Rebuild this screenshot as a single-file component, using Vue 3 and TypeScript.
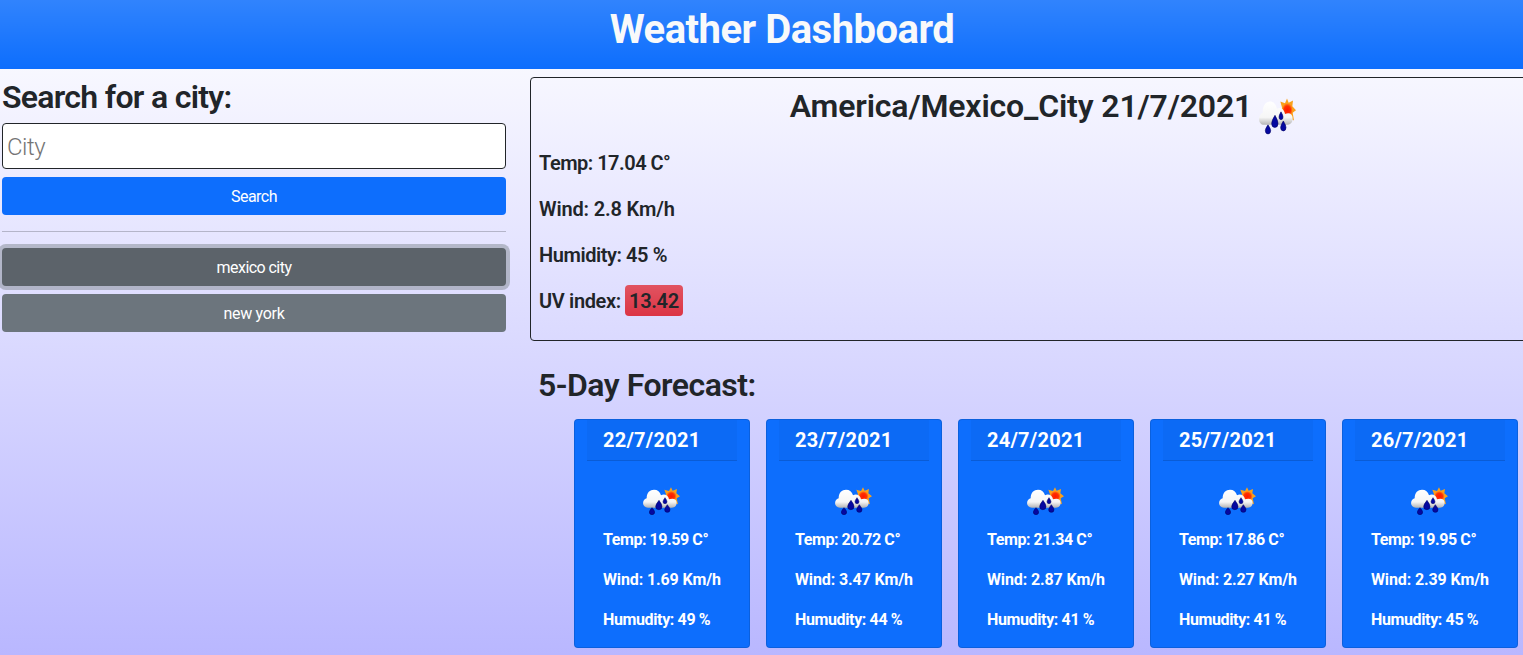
<script setup lang="ts">
import { ref, h } from 'vue'

interface Day {
  date: string
  temp: string
  wind: string
  humidity: string
}

const city = ref('')
const active = ref('mexico city')
const history: string[] = ['mexico city', 'new york']
const days: Day[] = [
  { date: '22/7/2021', temp: '19.59', wind: '1.69', humidity: '49' },
  { date: '23/7/2021', temp: '20.72', wind: '3.47', humidity: '44' },
  { date: '24/7/2021', temp: '21.34', wind: '2.87', humidity: '41' },
  { date: '25/7/2021', temp: '17.86', wind: '2.27', humidity: '41' },
  { date: '26/7/2021', temp: '19.95', wind: '2.39', humidity: '45' },
]

const drops = [
  'M30 62 Q38 71 38 75 A8 8 0 0 1 22 75 Q22 71 30 62Z',
  'M51 40 Q60 52 60 59 A9.5 9 0 0 1 41 59 Q41 52 51 40Z',
  'M69 32 Q75 40 75 44 A6 6 0 0 1 63 44 Q63 40 69 32Z',
  'M76 53 Q84 63 84 68 A8 8 0 0 1 68 68 Q68 63 76 53Z',
]

const RainIcon = () =>
  h('svg', { viewBox: '0 0 120 90', preserveAspectRatio: 'none', 'aria-hidden': 'true' }, [
    h('defs', [
      h('linearGradient', { id: 'cloud', x1: 0, y1: 0, x2: 0, y2: 1 }, [
        h('stop', { offset: '0', 'stop-color': '#fff' }),
        h('stop', { offset: '.68', 'stop-color': '#f6f6f6' }),
        h('stop', { offset: '1', 'stop-color': '#b4b4b4' }),
      ]),
      h('radialGradient', { id: 'sun' }, [
        h('stop', { offset: '0', 'stop-color': '#ff1600' }),
        h('stop', { offset: '.6', 'stop-color': '#ff3000' }),
        h('stop', { offset: '1', 'stop-color': '#ff9a20' }),
      ]),
    ]),
    h('path', {
      fill: '#f9a11b',
      d: 'M87 1 L92 11 L105 6 L103 19 L114 28 L104 34 L108 52 L96 47 L88 56 L70 42 L72 22 L67 8 L81 12Z',
    }),
    h('circle', { cx: 88, cy: 28, r: 16, fill: 'url(#sun)' }),
    h('path', {
      fill: 'url(#cloud)',
      d: 'M18 62 C-1 62 -1 38 14 34 C14 16 24 8 36 8 C47 8 54 14 57 25 C68 19 79 26 81 37 C94 32 104 37 104 47 C104 58 96 62 86 62Z',
    }),
    ...drops.map((d) => h('path', { d, fill: '#0508a0', stroke: '#000060', 'stroke-width': 1.5 })),
  ])
</script>

<template>
  <div class="page">
    <header class="top"><h1>Weather Dashboard</h1></header>
    <main class="content">
      <aside class="side">
        <h2 class="search-title">Search for a city:</h2>
        <input v-model="city" class="field" placeholder="City" />
        <button class="btn primary">Search</button>
        <hr />
        <button
          v-for="name in history"
          :key="name"
          class="btn secondary"
          :class="{ active: name === active }"
          @click="active = name"
        >{{ name }}</button>
      </aside>
      <section class="main">
        <article class="today">
          <h2 class="place"><span>America/Mexico_City 21/7/2021</span><RainIcon class="icon big" /></h2>
          <p class="temp">Temp: 17.04 C°</p>
          <p class="wind">Wind: 2.8 Km/h</p>
          <p class="humidity">Humidity: 45 %</p>
          <p class="index">UV index: <span class="uv">13.42</span></p>
        </article>
        <h2 class="forecast-title">5-Day Forecast:</h2>
        <div class="cards">
          <article v-for="d in days" :key="d.date" class="card">
            <h5>{{ d.date }}</h5>
            <div class="body">
              <RainIcon class="icon small" />
              <p class="temp">Temp: {{ d.temp }} C°</p>
              <p class="wind">Wind: {{ d.wind }} Km/h</p>
              <p class="humidity">Humudity: {{ d.humidity }} %</p>
            </div>
          </article>
        </div>
      </section>
    </main>
  </div>
</template>

<style>
html, body { margin: 0; overflow: hidden; }
</style>

<style scoped>
* { box-sizing: border-box; }
.page {
  width: 1564px;
  height: 655px;
  overflow: hidden;
  font-family: Roboto, "Liberation Sans", sans-serif;
  font-size: 16px;
  color: #212529;
  background: linear-gradient(#ffffff, #b9b7ff);
}
h1, h2, h5, p { margin: 0; white-space: nowrap; }
.top {
  height: 69px;
  background: linear-gradient(rgba(255, 255, 255, .15), rgba(255, 255, 255, 0)) #0d6efd;
  text-align: center;
}
h1 { font-size: 40px; line-height: 48px; padding-top: 6px; font-weight: 700; letter-spacing: -.5px; color: #f8f9fa; }
h2 { font-size: 32px; line-height: 38px; font-weight: 600; }
.content { display: flex; gap: 24px; padding: 8px 2px 0; }
.side { width: 504px; flex: none; display: flex; flex-direction: column; }
.search-title { padding-top: 1px; height: 46px; letter-spacing: -.7px; }
.field {
  height: 46px;
  padding: 3px 4px 1px;
  border: 1px solid #212529;
  border-radius: 4px;
  font: 300 24px Roboto, sans-serif;
  letter-spacing: -.5px;
  background: #fff;
}
.field::placeholder { color: #757575; opacity: 1; }
.btn {
  height: 38px;
  margin-top: 8px;
  padding: 1px 0 0;
  border: 0;
  border-radius: 4px;
  font: 400 16px/24px Roboto, sans-serif;
  letter-spacing: -.55px;
  color: #fff;
}
.primary { background: #0d6efd; }
.secondary { background: #6c757d; letter-spacing: -.3px; }
.active { background: #5c636a; box-shadow: 0 0 0 4px rgba(130, 138, 145, .5); letter-spacing: -.55px; }
hr { width: 100%; height: 1px; margin: 16px 0 8px; border: 0; background: #212529; opacity: .25; }
.main { width: 1032px; flex: none; }
.today { height: 264px; border: 1px solid #212529; border-radius: 4px; padding: 8px; }
.today p { height: 30px; margin-bottom: 16px; font-size: 20px; line-height: 30px; font-weight: 600; }
.today .temp { letter-spacing: -.5px; }
.today .wind { letter-spacing: -.15px; }
.today .humidity { letter-spacing: -.43px; }
.today .index { display: flex; gap: 4px; letter-spacing: -.35px; }
.place { display: flex; justify-content: center; height: 62px; padding: 1px 4px 0 0; letter-spacing: -.15px; }
.icon { display: block; flex: none; overflow: visible; }
.big { width: 40px; height: 39px; margin: 11px 0 0 6px; }
.uv {
  width: 58px;
  height: 31px;
  margin-top: -1px;
  padding-top: 1px;
  border-radius: 4px;
  text-align: center;
  background: linear-gradient(rgba(255, 255, 255, .15), rgba(255, 255, 255, 0)) #dc3545;
}
.forecast-title { margin: 25px 0 15px 8px; letter-spacing: -.5px; }
.cards { display: flex; gap: 16px; padding-left: 44px; }
.card {
  width: 176px;
  height: 229px;
  padding: 0 12px;
  border: 1px solid rgba(0, 0, 0, .125);
  border-radius: 4px;
  background: #0d6efd;
  color: #fff;
}
h5 {
  height: 41px;
  padding: 0 16px;
  font-size: 20px;
  line-height: 41px;
  font-weight: 700;
  letter-spacing: .25px;
  background: rgba(0, 0, 0, .03);
  border-bottom: 1px solid rgba(0, 0, 0, .125);
}
.body { padding: 26px 16px 0; }
.small { width: 40px; height: 30px; margin: 0 0 11px 39px; }
.body p { height: 24px; margin-bottom: 16px; line-height: 24px; font-weight: 700; }
.body .temp { letter-spacing: -.43px; }
.body .wind { letter-spacing: -.13px; }
.body .humidity { letter-spacing: -.37px; }
</style>
